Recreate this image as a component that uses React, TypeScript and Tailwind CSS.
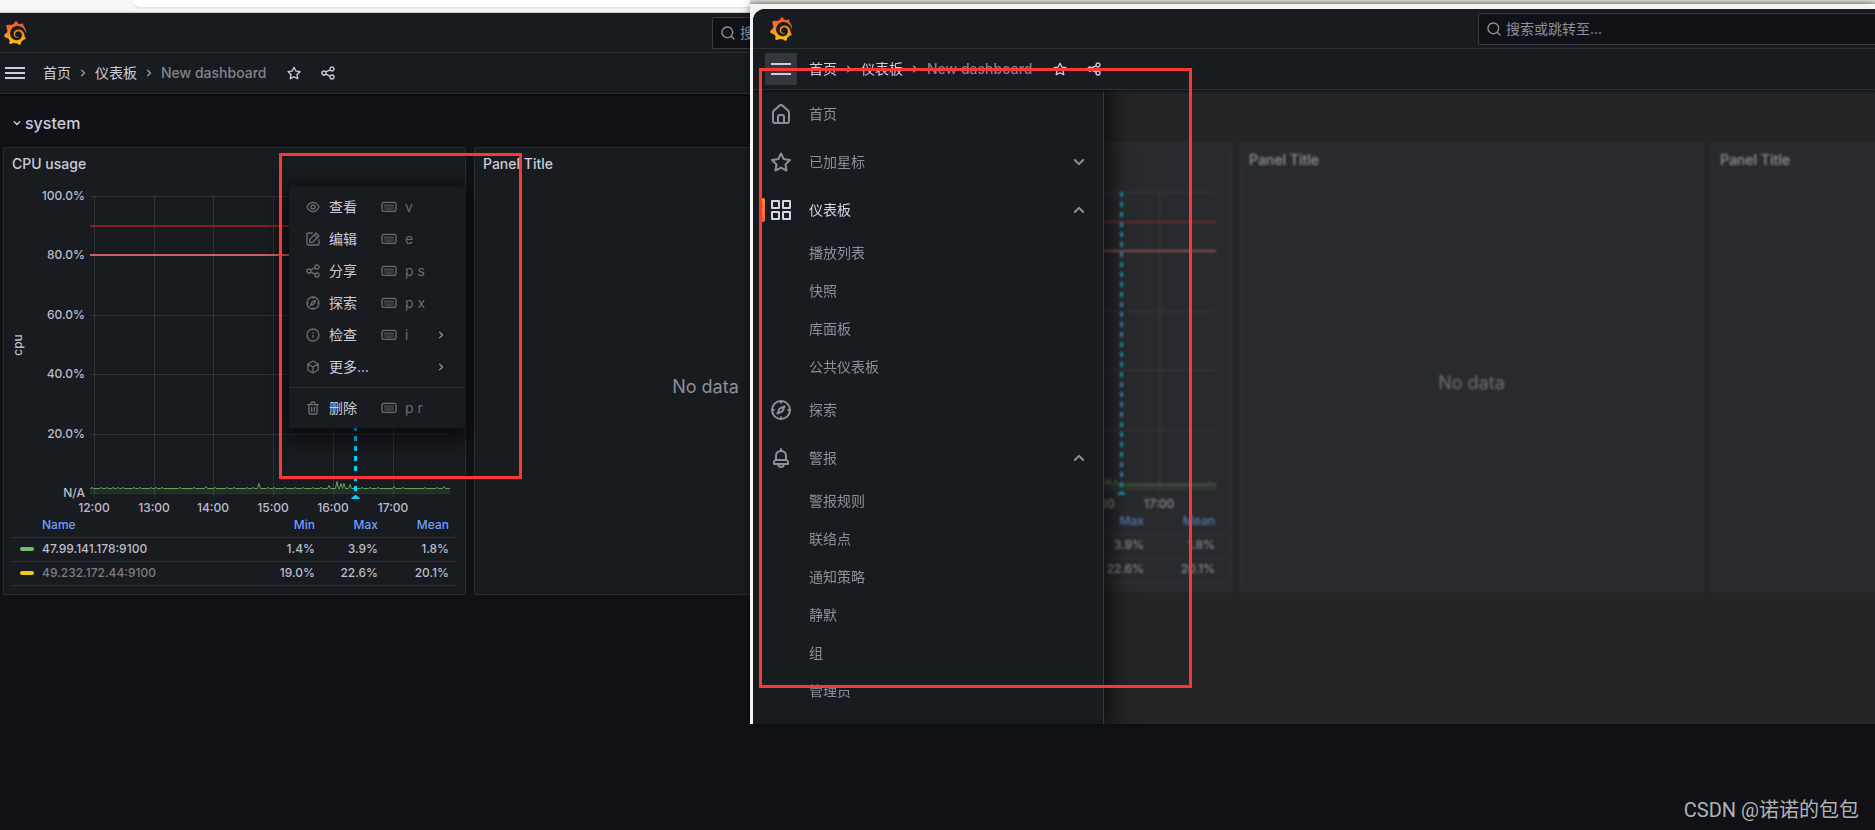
import type { ReactNode } from "react";
import { SiGrafana } from "react-icons/si";

const ICONS: Record<string, ReactNode> = {
  home: <path d="M20,8h0L14,2.74a3,3,0,0,0-4,0L4,8a3,3,0,0,0-1,2.26V19a3,3,0,0,0,3,3H18a3,3,0,0,0,3-3V10.25A3,3,0,0,0,20,8ZM14,20H10V15a1,1,0,0,1,1-1h2a1,1,0,0,1,1,1Zm5-1a1,1,0,0,1-1,1H16V15a3,3,0,0,0-3-3H11a3,3,0,0,0-3,3v5H6a1,1,0,0,1-1-1V10.25a1,1,0,0,1,.34-.75l6-5.25a1,1,0,0,1,1.32,0l6,5.25a1,1,0,0,1,.34.75Z" />,
  star: <path d="M22,9.67A1,1,0,0,0,21.14,9l-5.69-.83L12.9,3a1,1,0,0,0-1.8,0L8.55,8.16,2.86,9a1,1,0,0,0-.81.68,1,1,0,0,0,.25,1l4.13,4-1,5.68A1,1,0,0,0,6.9,21.44L12,18.77l5.1,2.67a.93.93,0,0,0,.46.12,1,1,0,0,0,.59-.19,1,1,0,0,0,.4-1l-1-5.68,4.13-4A1,1,0,0,0,22,9.67Zm-6.15,4a1,1,0,0,0-.29.88l.72,4.2-3.76-2a1.06,1.06,0,0,0-.94,0l-3.76,2,.72-4.2a1,1,0,0,0-.29-.88l-3-3,4.21-.61a1,1,0,0,0,.76-.55L12,5.7l1.88,3.82a1,1,0,0,0,.76.55l4.21.61Z" />,
  share: <path d="M18,14a4,4,0,0,0-3.08,1.48l-5.1-2.35a3.64,3.64,0,0,0,0-2.26l5.1-2.35A4,4,0,1,0,14,6a4.17,4.17,0,0,0,.07.71L8.79,9.14a4,4,0,1,0,0,5.72l5.28,2.43A4.17,4.17,0,0,0,14,18a4,4,0,1,0,4-4ZM18,4a2,2,0,1,1-2,2A2,2,0,0,1,18,4ZM6,14a2,2,0,1,1,2-2A2,2,0,0,1,6,14Zm12,6a2,2,0,1,1,2-2A2,2,0,0,1,18,20Z" />,
  bell: <path d="M18,13.18V10a6,6,0,0,0-5-5.91V3a1,1,0,0,0-2,0V4.09A6,6,0,0,0,6,10v3.18A3,3,0,0,0,4,16v2a1,1,0,0,0,1,1H8.14a4,4,0,0,0,7.72,0H19a1,1,0,0,0,1-1V16A3,3,0,0,0,18,13.18ZM8,10a4,4,0,0,1,8,0v3H8Zm4,10a2,2,0,0,1-1.72-1h3.44A2,2,0,0,1,12,20Zm6-3H6V16a1,1,0,0,1,1-1H17a1,1,0,0,1,1,1Z" />,
  eye: <path d="M21.92,11.6C19.9,6.91,16.1,4,12,4S4.1,6.91,2.08,11.6a1,1,0,0,0,0,.8C4.1,17.09,7.9,20,12,20s7.9-2.91,9.92-7.6A1,1,0,0,0,21.92,11.6ZM12,18c-3.17,0-6.17-2.29-7.9-6C5.83,8.29,8.83,6,12,6s6.17,2.29,7.9,6C18.17,15.71,15.17,18,12,18ZM12,8a4,4,0,1,0,4,4A4,4,0,0,0,12,8Zm0,6a2,2,0,1,1,2-2A2,2,0,0,1,12,14Z" />,
  edit: <path d="M21,12a1,1,0,0,0-1,1v6a1,1,0,0,1-1,1H5a1,1,0,0,1-1-1V5A1,1,0,0,1,5,4h6a1,1,0,0,0,0-2H5A3,3,0,0,0,2,5V19a3,3,0,0,0,3,3H19a3,3,0,0,0,3-3V13A1,1,0,0,0,21,12ZM6,12.76V17a1,1,0,0,0,1,1h4.24a1,1,0,0,0,.71-.29l6.92-6.93h0L21.71,8a1,1,0,0,0,0-1.42L17.47,2.29a1,1,0,0,0-1.42,0L13.23,5.12h0L6.29,12.05A1,1,0,0,0,6,12.76ZM16.76,4.41l2.83,2.83L18.17,8.66,15.34,5.83ZM8,13.17l5.93-5.93,2.83,2.83L10.83,16H8Z" />,
  info: <path d="M12,2A10,10,0,1,0,22,12,10,10,0,0,0,12,2Zm0,18a8,8,0,1,1,8-8A8,8,0,0,1,12,20Zm0-8.5a1,1,0,0,0-1,1v3a1,1,0,0,0,2,0v-3A1,1,0,0,0,12,11.5Zm0-4a1.25,1.25,0,1,0,1.25,1.25A1.25,1.25,0,0,0,12,7.5Z" />,
  trash: <path d="M10,18a1,1,0,0,0,1-1V11a1,1,0,0,0-2,0v6A1,1,0,0,0,10,18ZM20,6H16V5a3,3,0,0,0-3-3H11A3,3,0,0,0,8,5V6H4A1,1,0,0,0,4,8H5V19a3,3,0,0,0,3,3h8a3,3,0,0,0,3-3V8h1a1,1,0,0,0,0-2ZM10,5a1,1,0,0,1,1-1h2a1,1,0,0,1,1,1V6H10Zm7,14a1,1,0,0,1-1,1H8a1,1,0,0,1-1-1V8H17Zm-3-1a1,1,0,0,0,1-1V11a1,1,0,0,0-2,0v6A1,1,0,0,0,14,18Z" />,
  search: <path d="M21.71,20.29,18,16.61A9,9,0,1,0,16.61,18l3.68,3.68a1,1,0,0,0,1.42,0A1,1,0,0,0,21.71,20.29ZM11,18a7,7,0,1,1,7-7A7,7,0,0,1,11,18Z" />,
  menu: <path d="M0 4.8h24v2.4H0zM0 10.8h24v2.4H0zM0 16.8h24v2.4H0z" />,
  apps: (
    <g fill="none" stroke="currentColor" strokeWidth="2" strokeLinejoin="round">
      <path d="M3 3h7v7H3zM14 3h7v7h-7zM3 14h7v7H3zM14 14h7v7h-7z" />
    </g>
  ),
  compass: (
    <g fill="none" stroke="currentColor" strokeWidth="2" strokeLinecap="round" strokeLinejoin="round">
      <circle cx="12" cy="12" r="9" />
      <path d="M12 3.5v1.3M12 19.2v1.3M3.5 12h1.3M19.2 12h1.3" />
      <path d="M15.6 8.4l-5 2.2-2.2 5 5-2.2z" />
    </g>
  ),
  cube: (
    <g fill="none" stroke="currentColor" strokeWidth="2" strokeLinecap="round" strokeLinejoin="round">
      <path d="M12 3l7.8 4.5v9L12 21l-7.8-4.5v-9zM4.500 7.700L12 12l7.500-4.300M12 12v8.800" />
    </g>
  ),
  keyboard: (
    <g fill="none" stroke="currentColor" strokeWidth="2">
      <rect x="1.5" y="5" width="21" height="13.5" rx="2.5" />
      <path d="M5 9.2h14M5 12h14" strokeWidth="1.6" strokeDasharray="2 1" />
      <path d="M5 15h2M8 15h8M17 15h2" strokeWidth="1.6" />
    </g>
  ),
  down: <path d="M7.8 10l4.2 4.2 4.2-4.2" fill="none" stroke="currentColor" strokeWidth="2" strokeLinecap="round" />,
  up: <path d="M7.8 14l4.2-4.2 4.2 4.2" fill="none" stroke="currentColor" strokeWidth="2" strokeLinecap="round" />,
  right: <path d="M10 7.8l4.2 4.2-4.2 4.2" fill="none" stroke="currentColor" strokeWidth="2" strokeLinecap="round" />,
};

function Icon({ name, className = "size-4" }: { name: string; className?: string }) {
  return (
    <svg viewBox="0 0 24 24" fill="currentColor" aria-hidden="true" className={`${className} shrink-0`}>
      {ICONS[name]}
    </svg>
  );
}

function Logo() {
  return (
    <a href="#home" aria-label="Grafana">
      <svg className="absolute size-0" aria-hidden="true">
        <linearGradient id="logo-fill" x1="0" y1="0" x2="0" y2="1">
          <stop offset="0.1" stopColor="#f05a28" />
          <stop offset="0.55" stopColor="#f7901e" />
          <stop offset="1" stopColor="#fbca0a" />
        </linearGradient>
      </svg>
      <SiGrafana className="size-6" fill="url(#logo-fill)" />
    </a>
  );
}

function Header({ menuOpen = false }: { menuOpen?: boolean }) {
  return (
    <header className="relative z-10 bg-[#181b1f] shadow-[0_1px_3px_rgba(0,0,0,0.6)]">
      <div className="flex h-10 items-center border-b border-[#2d2f34]">
        <div className="w-[725px] shrink-0 pl-4">
          <Logo />
        </div>
        <label className="flex h-8 flex-1 items-center gap-1 rounded-l-xs border border-r-0 border-[#393b40] bg-[#111217] pl-[7px] text-[#8e8f9a]">
          <Icon name="search" />
          <input
            type="text"
            aria-label="搜索"
            placeholder="搜索或跳转至..."
            className="min-w-0 flex-1 bg-transparent text-sm outline-none placeholder:text-[#8e8f9a]"
          />
        </label>
      </div>
      <div className="flex h-[41px] items-center border-b border-[#2d2f34] pl-3 text-[#ccccdc]">
        <button
          type="button"
          aria-label="菜单"
          aria-expanded={menuOpen}
          className={`flex size-8 items-center justify-center rounded-xs ${menuOpen ? "bg-[#34363b]" : ""}`}
        >
          <Icon name="menu" className="size-5" />
        </button>
        <nav className="ml-3 flex items-center gap-1 text-sm">
          <a href="#home">首页</a>
          <span className="text-[#9b9ca8]"><Icon name="right" /></span>
          <a href="#dashboards">仪表板</a>
          <span className="text-[#9b9ca8]"><Icon name="right" /></span>
          <span className="font-medium text-[#82838e]">New dashboard</span>
        </nav>
        <div className="ml-[19px] flex items-center gap-[18px]">
          <button type="button" aria-label="加星标">
            <Icon name="star" className="block size-4" />
          </button>
          <button type="button" aria-label="分享">
            <Icon name="share" className="block size-4" />
          </button>
        </div>
      </div>
    </header>
  );
}

const Y_TICKS = [
  { label: "100.0%", y: 16 },
  { label: "80.0%", y: 75 },
  { label: "60.0%", y: 135 },
  { label: "40.0%", y: 194 },
  { label: "20.0%", y: 254 },
  { label: "N/A", y: 313 },
];
const X_TICKS = [
  { label: "12:00", x: 90 },
  { label: "13:00", x: 150 },
  { label: "14:00", x: 209 },
  { label: "15:00", x: 269 },
  { label: "16:00", x: 329 },
  { label: "17:00", x: 389 },
];
// [x, height] of every bump above the flat base load
const SPIKES = [
  [88, 1], [97, 1], [103, 1], [109, 1], [114, 1], [119, 1], [130, 1], [136, 1], [147, 1], [152, 1], [158, 1],
  [176, 1], [190, 1], [202, 2], [211, 1], [223, 1], [230, 1], [243, 1], [249, 1], [255, 5], [264, 1], [270, 1],
  [281, 1], [291, 1], [299, 1], [309, 1], [317, 1], [325, 3], [333, 7], [337, 5], [340, 5], [346, 4], [358, 1],
  [366, 1], [374, 1], [390, 2], [399, 1], [421, 1], [433, 1], [440, 2],
];
const BASE = 308.5;
const series = `M86 ${BASE}` + SPIKES.map(([x, h]) => `L${x - 1.5} ${BASE}L${x} ${BASE - h}L${x + 1.5} ${BASE}`).join("") + `L446 ${BASE}`;

function CpuChart() {
  return (
    <svg viewBox="0 0 461 333" className="block w-full overflow-visible font-[Inter,sans-serif] text-xs font-medium" fill="#bdbdcc">
      <g stroke="#ffffff" strokeOpacity="0.1" shapeRendering="crispEdges">
        {Y_TICKS.map((t) => <path key={t.label} d={`M86 ${t.y + 0.5}H446`} />)}
        {X_TICKS.map((t) => <path key={t.label} d={`M${t.x + 0.5} 16V317`} />)}
      </g>
      {Y_TICKS.map((t) => (
        <text key={t.label} x="81" y={t.y + 4} textAnchor="end">{t.label}</text>
      ))}
      {X_TICKS.map((t) => (
        <text key={t.label} x={t.x} y="332" textAnchor="middle">{t.label}</text>
      ))}
      <text transform="translate(18 165) rotate(-90)" textAnchor="middle">cpu</text>
      <path d="M86 46H446" stroke="#8f1a28" strokeWidth="2" />
      <path d="M86 75H446" stroke="#cc5f68" strokeWidth="2" />
      <path d="M86 308H446V313H86z" fill="#73bf69" fillOpacity="0.12" />
      <path d={series} fill="none" stroke="#63a55b" />
      <path d="M351.5 16V313" stroke="#00d3ff" strokeWidth="3" strokeDasharray="5 5" />
      <path d="M347 319q0-1 1-1.500l3-2.500h1l3 2.500q1 .5 1 1.500z" fill="#00d3ff" />
    </svg>
  );
}

const LEGEND = [
  { name: "47.99.141.178:9100", color: "bg-[#73bf69]", text: "", min: "1.4%", max: "3.9%", mean: "1.8%" },
  { name: "49.232.172.44:9100", color: "bg-[#f2cc0c]", text: "text-[#7c7d87]", min: "19.0%", max: "22.6%", mean: "20.1%" },
];

function Legend() {
  return (
    <table className="mx-2 table-fixed text-right text-xs font-medium text-[#bdbdcc]">
      <thead className="text-[#6e9fff]">
        <tr className="h-6 border-b border-[#2d2f34]">
          <th className="pl-[30px] text-left font-medium">Name</th>
          <th className="w-20 pr-2 font-medium">Min</th>
          <th className="w-[63px] pr-2 font-medium">Max</th>
          <th className="w-[71px] pr-2 font-medium">Mean</th>
        </tr>
      </thead>
      <tbody>
        {LEGEND.map((row) => (
          <tr key={row.name} className="h-6 border-b border-[#2d2f34]">
            <td className="pl-2">
              <span className={`flex items-center gap-2 ${row.text}`}>
                <i className={`h-1 w-3.5 rounded-full ${row.color}`} />
                {row.name}
              </span>
            </td>
            <td className="pr-2">{row.min}</td>
            <td className="pr-2">{row.max}</td>
            <td className="pr-2">{row.mean}</td>
          </tr>
        ))}
      </tbody>
    </table>
  );
}

function Panel({ title, children }: { title: string; children?: ReactNode }) {
  return (
    <section className="relative flex h-[448px] w-[463px] shrink-0 flex-col rounded-xs border border-[#2a2c31] bg-[#181b1f]">
      <h2 className="flex h-8 shrink-0 items-center px-2 text-sm font-medium">{title}</h2>
      {children ?? (
        <div className="flex flex-1 items-center justify-center text-lg text-[#8e8f9a]">No data</div>
      )}
    </section>
  );
}

function Dashboard({ children }: { children?: ReactNode }) {
  return (
    <main className="pl-4">
      <button type="button" className="flex h-[53px] items-center pt-1 pl-1.5 font-medium">
        <Icon name="down" />
        system
      </button>
      <div className="flex gap-2">
        <Panel title="CPU usage">
          <CpuChart />
          <Legend />
          {children}
        </Panel>
        <Panel title="Panel Title" />
        <Panel title="Panel Title" />
      </div>
    </main>
  );
}

const ACTIONS = [
  { icon: "eye", label: "查看", keys: "v" },
  { icon: "edit", label: "编辑", keys: "e" },
  { icon: "share", label: "分享", keys: "p s" },
  { icon: "compass", label: "探索", keys: "p x" },
  { icon: "info", label: "检查", keys: "i", more: true },
  { icon: "cube", label: "更多...", more: true },
  { icon: "trash", label: "删除", keys: "p r", divided: true },
];

function PanelMenu() {
  return (
    <ul role="menu" className="absolute top-[39px] right-0 w-44 rounded-xs bg-[#181b1f] py-1 text-sm shadow-[0_6px_20px_6px_rgba(0,0,0,0.6)]">
      {ACTIONS.map((a) => (
        <li key={a.label} role="none" className={a.divided ? "mt-1 border-t border-[#2d2f34] pt-1" : ""}>
          <button type="button" role="menuitem" className="flex h-8 w-full items-center px-4 text-[#6b6c75]">
            <Icon name={a.icon} />
            <span className="ml-2 text-[#ccccdc]">{a.label}</span>
            {a.keys && (
              <span className="ml-6 flex items-center gap-2">
                <Icon name="keyboard" />
                {a.keys}
              </span>
            )}
            {a.more && (
              <span className="ml-auto text-[#8e8f9a]">
                <Icon name="right" />
              </span>
            )}
          </button>
        </li>
      ))}
    </ul>
  );
}

const NAV = [
  { icon: "home", label: "首页" },
  { icon: "star", label: "已加星标", chevron: "down" },
  { icon: "apps", label: "仪表板", chevron: "up", active: true, children: ["播放列表", "快照", "库面板", "公共仪表板"] },
  { icon: "compass", label: "探索" },
  { icon: "bell", label: "警报", chevron: "up", children: ["警报规则", "联络点", "通知策略", "静默", "组", "管理员"] },
];

function MegaMenu() {
  return (
    <nav className="relative w-[351px] border-r border-[#36383d] bg-[#181b1f] pb-3.5 text-sm text-[#8e8f9a] shadow-[4px_0_20px_4px_rgba(0,0,0,0.6)]">
      <ul>
        {NAV.map((item) => (
          <li key={item.label}>
            <div className={`relative flex h-12 items-center px-4 pr-3 ${item.active ? "text-[#d5d5e4]" : ""}`}>
              {item.active && (
                <i className="absolute left-2 h-6 w-1 rounded-xs bg-linear-to-b from-[#ff8833] to-[#f55f3e]" />
              )}
              <Icon name={item.icon} className="size-6" />
              <a href="#nav" className="ml-4 flex-1">{item.label}</a>
              {item.chevron && (
                <button type="button" aria-label={item.label} className="text-[#8e8f9a]">
                  <Icon name={item.chevron} className="block size-6" />
                </button>
              )}
            </div>
            {item.children && (
              <ul>
                {item.children.map((c) => (
                  <li key={c} className="flex h-[38px] items-center pl-14">
                    <a href="#nav">{c}</a>
                  </li>
                ))}
              </ul>
            )}
          </li>
        ))}
      </ul>
    </nav>
  );
}

export default function App() {
  return (
    <div className="relative min-h-screen overflow-hidden bg-[#111217] font-[Inter,'Noto_Sans_CJK_SC',sans-serif] text-[#ccccdc]">
      {/* bottom edge of the browser toolbar */}
      <div className="h-[13px] border-b border-[#e4e4e4] bg-[#f7f7f7] pl-[133px]">
        <div className="h-[7px] rounded-bl-2xl bg-white shadow-sm" />
      </div>
      <div className="-ml-[13px]">
        <Header />
        <Dashboard>
          <PanelMenu />
        </Dashboard>
      </div>

      <div className="absolute top-[153px] left-[279px] z-20 h-[326px] w-[243px] border-3 border-[#fb3838]" />

      {/* second window, with the navigation open */}
      <div className="absolute top-0 right-0 left-[40%] z-30">
        <div className="h-1 border-b-2 border-[#c6c6c6] bg-[#dedede]" />
        <div className="relative bg-[#f5f4f4] pt-[5px] pl-[3px] shadow-[0_0_8px_rgba(0,0,0,0.45)]">
          <div className="overflow-hidden rounded-tl-xl bg-[#111217]">
            <Header menuOpen />
            <div className="relative overflow-hidden">
              <div className="absolute inset-0">
                <Dashboard />
              </div>
              <div className="absolute inset-0 bg-[#3f3e3e]/45 backdrop-blur-[1px]" />
              <MegaMenu />
            </div>
          </div>
          <div className="absolute top-16 left-[9px] z-20 h-[620px] w-[433px] border-3 border-[#fb3838]" />
        </div>
      </div>

      <div className="absolute right-4 bottom-1.5 font-[Roboto,'Noto_Sans_CJK_SC',sans-serif] text-xl text-[#b4b4b6] text-shadow-sm">
        CSDN @诺诺的包包
      </div>
    </div>
  );
}
